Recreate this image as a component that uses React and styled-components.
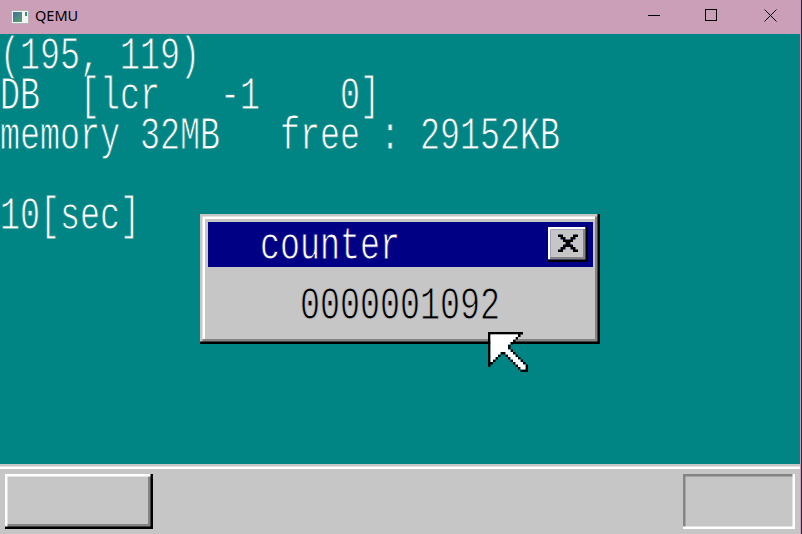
import React from "react";
import styled, { createGlobalStyle } from "styled-components";

const Global = createGlobalStyle`
  html, body { margin: 0; padding: 0; background: #cb9fb8; }
  #root { width: 802px; height: 534px; overflow: hidden; }
`;

const Shell = styled.div`
  width: 802px;
  height: 534px;
  box-sizing: border-box;
  border-right: 1px solid #2c2233;
  display: flex;
  flex-direction: column;
  background: #cb9fb8;
  overflow: hidden;
`;

const TitleBar = styled.header`
  height: 34px;
  flex: none;
  display: flex;
  align-items: center;
  padding: 0 2px 0 11px;
  gap: 6px;
  font: 14.5px "Noto Sans", "Open Sans", sans-serif;
  color: #000;
`;

const TitleText = styled.span`
  flex: 1;
  position: relative;
  top: -2px;
`;

const Controls = styled.div`
  display: flex;
  height: 34px;
`;

const ControlButton = styled.div`
  width: 58px;
  display: flex;
  align-items: center;
  justify-content: center;
  position: relative;
  top: -2px;
  left: ${(p) => p.$nudge || 0}px;
`;

const Screen = styled.main`
  width: 800px;
  height: 500px;
  flex: none;
  background: #008484;
  display: flex;
  flex-direction: column;
  position: relative;
  overflow: hidden;
`;

const Desktop = styled.div`
  height: 430px;
  flex: none;
`;

const Line = styled.div`
  height: 40px;
  line-height: 40px;
  width: 1000px;
  white-space: pre;
  font-family: "Liberation Mono", monospace;
  font-size: 46px;
  color: ${(p) => p.$color || "#fff"};
  -webkit-text-stroke: 0.9px ${(p) => p.$back || "#008484"};
  transform: translateY(3px) scaleX(0.7246);
  transform-origin: left center;
`;

const Taskbar = styled.footer`
  height: 70px;
  flex: none;
  box-sizing: border-box;
  background: #c6c6c6;
  box-shadow: inset 0 2.5px 0 #c6c6c6, inset 0 5px 0 #fff;
  display: flex;
  justify-content: space-between;
  align-items: flex-start;
  padding: 10px 5px 0;
`;

const StartButton = styled.div`
  width: 147.5px;
  height: 55px;
  box-shadow:
    inset -2.5px -2.5px 0 #000,
    inset 2.5px 2.5px 0 #fff,
    inset -5px -5px 0 #848484;
`;

const StatusBox = styled.div`
  width: 112.5px;
  height: 55px;
  box-shadow:
    inset -2.5px -2.5px 0 #fff,
    inset 2.5px 2.5px 0 #848484;
`;

const Window = styled.section`
  position: absolute;
  left: 200px;
  top: 180px;
  width: 400px;
  height: 130px;
  box-sizing: border-box;
  padding: 7.5px;
  background: #c6c6c6;
  box-shadow:
    inset -2.5px -2.5px 0 #000,
    inset 2.5px 2.5px 0 #c6c6c6,
    inset -5px -5px 0 #848484,
    inset 5px 5px 0 #fff;
`;

const WindowTitle = styled.div`
  height: 45px;
  box-sizing: border-box;
  background: #000084;
  display: flex;
  align-items: flex-start;
  justify-content: space-between;
  padding: 5px 5px 0 0;
`;

const WindowName = styled.div`
  margin-left: 52.5px;
  margin-top: -2.5px;
  width: 200px;
`;

const Counter = styled.div`
  margin: 17.5px 0 0 92.5px;
  width: 200px;
`;

const CursorSprite = styled.div`
  position: absolute;
  left: 487.5px;
  top: 297.5px;
  line-height: 0;
`;

const Pixels = styled.svg`
  display: block;
  flex: none;
`;

function PixelArt({ rows, palette, scale = 2.5 }) {
  const w = rows[0].length;
  const h = rows.length;
  const paths = {};
  rows.forEach((row, y) => {
    [...row].forEach((c, x) => {
      if (palette[c]) {
        paths[c] = (paths[c] || "") + `M${x} ${y}h1v1h-1z`;
      }
    });
  });
  return (
    <Pixels width={w * scale} height={h * scale} viewBox={`0 0 ${w} ${h}`}>
      {Object.entries(paths).map(([c, d]) => (
        <path key={c} d={d} fill={palette[c]} />
      ))}
    </Pixels>
  );
}

const cursor = [
  "**************..",
  "*OOOOOOOOOOO*...",
  "*OOOOOOOOOO*....",
  "*OOOOOOOOO*.....",
  "*OOOOOOOO*......",
  "*OOOOOOO*.......",
  "*OOOOOOO*.......",
  "*OOOOOOOO*......",
  "*OOOO**OOO*.....",
  "*OOO*..*OOO*....",
  "*OO*....*OOO*...",
  "*O*......*OOO*..",
  "**........*OOO*.",
  "*..........*OOO*",
  "............*OO*",
  ".............***",
];

const closeBtn = [
  "OOOOOOOOOOOOOOO@",
  "OQQQQQQQQQQQQQ$@",
  "OQQQQQQQQQQQQQ$@",
  "OQQQ@@QQQQ@@QQ$@",
  "OQQQQ@@QQ@@QQQ$@",
  "OQQQQQ@@@@QQQQ$@",
  "OQQQQQQ@@QQQQQ$@",
  "OQQQQQ@@@@QQQQ$@",
  "OQQQQ@@QQ@@QQQ$@",
  "OQQQ@@QQQQ@@QQ$@",
  "OQQQQQQQQQQQQQ$@",
  "OQQQQQQQQQQQQQ$@",
  "O$$$$$$$$$$$$$$@",
  "@@@@@@@@@@@@@@@@",
];

const QemuIcon = () => (
  <svg width="18" height="14" viewBox="0 0 18 14">
    <rect x="0.5" y="0.5" width="17" height="13" fill="#f4f4f4" stroke="#b5b5b5" />
    <defs>
      <linearGradient id="qi" x1="0" y1="0" x2="1" y2="1">
        <stop offset="0" stopColor="#3d6f9e" />
        <stop offset="1" stopColor="#5aa56c" />
      </linearGradient>
    </defs>
    <rect x="2" y="2" width="9" height="10" fill="url(#qi)" />
    <rect x="14" y="2" width="2" height="4" fill="#3f8f7a" />
  </svg>
);

export default function App() {
  return (
    <Shell>
      <Global />
      <TitleBar>
        <QemuIcon />
        <TitleText>QEMU</TitleText>
        <Controls>
          <ControlButton>
            <svg width="12" height="12" viewBox="0 0 12 12">
              <path d="M0 6.5h12" stroke="#000" fill="none" />
            </svg>
          </ControlButton>
          <ControlButton $nudge={-1}>
            <svg width="12" height="12" viewBox="0 0 12 12">
              <rect x="0.5" y="0.5" width="11" height="11" stroke="#000" fill="none" />
            </svg>
          </ControlButton>
          <ControlButton>
            <svg width="13" height="13" viewBox="0 0 13 13">
              <path d="M0.5 0.5l12 12M12.5 0.5l-12 12" stroke="#000" fill="none" />
            </svg>
          </ControlButton>
        </Controls>
      </TitleBar>
      <Screen>
        <Desktop>
          <Line>(195, 119)</Line>
          <Line>DB  [lcr   -1    0]</Line>
          <Line>memory 32MB   free : 29152KB</Line>
          <Line> </Line>
          <Line>10[sec]</Line>
        </Desktop>
        <Taskbar>
          <StartButton />
          <StatusBox />
        </Taskbar>
        <Window>
          <WindowTitle>
            <WindowName>
              <Line $back="#000084">counter</Line>
            </WindowName>
            <PixelArt
              rows={closeBtn}
              palette={{ O: "#fff", Q: "#c6c6c6", $: "#848484", "@": "#000" }}
            />
          </WindowTitle>
          <Counter>
            <Line $color="#000" $back="#c6c6c6">0000001092</Line>
          </Counter>
        </Window>
        <CursorSprite>
          <PixelArt rows={cursor} palette={{ "*": "#000", O: "#fff" }} />
        </CursorSprite>
      </Screen>
    </Shell>
  );
}
